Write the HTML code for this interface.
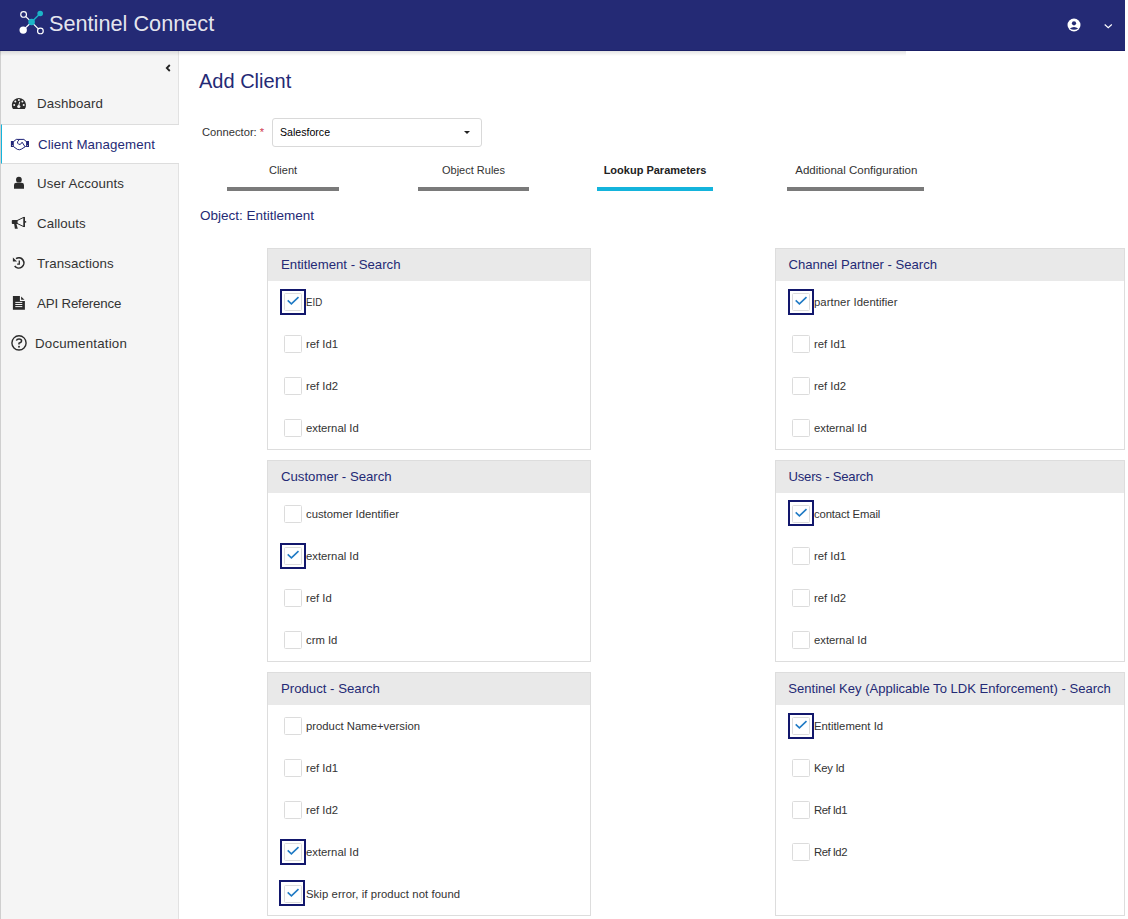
<!DOCTYPE html>
<html><head><meta charset="utf-8"><title>Sentinel Connect</title>
<style>
*{box-sizing:border-box;margin:0;padding:0}
html,body{width:1128px;height:919px;overflow:hidden;background:#fff;font-family:"Liberation Sans",sans-serif;}
body{position:relative}
.abs{position:absolute}
#hdr{position:absolute;left:0;top:0;width:1125px;height:51px;background:#242a75;border-bottom:1px solid #1a1f66}
#hshadow{position:absolute;left:0;top:51px;width:906px;height:5px;z-index:5;background:linear-gradient(rgba(0,0,0,.11),rgba(0,0,0,0))}
#brand{position:absolute;left:49px;top:9.6px;font-size:22.6px;color:rgba(255,255,255,.9);white-space:nowrap;line-height:28px;font-weight:400;transform:scaleX(.96);transform-origin:0 0}
#side{position:absolute;left:0;top:51px;width:179px;height:868px;background:#f5f5f5;border-left:1px solid #cfcfcf;border-right:1px solid #e2e2e2}
.mi{position:absolute;left:0;width:178px;height:40px;}
.mi .t{position:absolute;left:36px;top:1px;line-height:40px;font-size:13.3px;color:#333;white-space:nowrap;letter-spacing:.1px}
.mi.act{background:#fff;border-top:1px solid #ddd;border-bottom:1px solid #ddd;border-left:1px solid #14b4dc;width:178px}
.mi.act .t{color:#242a75;left:36px;top:0}
.mi svg{position:absolute}
#title{position:absolute;left:199px;top:68px;font-size:20px;color:#242a75;line-height:26px;white-space:nowrap}
#conn{position:absolute;left:202px;top:125px;font-size:11.2px;color:#333;line-height:14px;white-space:nowrap}
#conn b{color:#cf3d52;font-weight:400}
#sel{position:absolute;left:272px;top:118px;width:210px;height:29px;border:1px solid #d9d9d9;border-radius:3px;background:#fff}
#sel span{position:absolute;left:7px;top:6px;font-size:10.6px;line-height:14px;color:#000}
#sel i{position:absolute;left:191.3px;top:12px;width:0;height:0;border-left:3.2px solid transparent;border-right:3.2px solid transparent;border-top:3.3px solid #222}
.tab{position:absolute;top:163px;font-size:11px;line-height:14px;color:#333;text-align:center;white-space:nowrap}
.ul{position:absolute;top:187px;height:4px;background:#7a7a7a}
#obj{position:absolute;left:200px;top:207.6px;font-size:13.5px;line-height:16px;color:#242a75;white-space:nowrap}
.panel{position:absolute;border:1px solid #ddd;background:#fff}
.ph{position:absolute;left:0;top:0;right:0;height:32px;background:#e9e9e9}
.ph span{position:absolute;left:13px;top:8px;font-size:13.2px;line-height:16px;color:#242a75;white-space:nowrap}
.cb{position:absolute;left:16px;width:18px;height:18px;border:1px solid #dcdcdc;border-radius:1.5px;background:#fff}
.cb.on::before{content:"";box-sizing:border-box;position:absolute;left:-5px;top:-5px;width:26px;height:26px;border:2px solid #12176c}
.cb.fu::before{top:-6px}.cb.ful::before{top:-6px;left:-6px}
.cb.on svg{position:absolute;left:-1px;top:-1px}
.lb{position:absolute;left:38px;font-size:11.3px;line-height:14px;color:#333;white-space:nowrap}
</style></head><body>
<div id="hdr"></div>
<div id="hshadow"></div>
<svg class="abs" style="left:16px;top:6px" width="34" height="34" viewBox="16 6 34 34">
 <line x1="23.6" y1="14.4" x2="40.4" y2="30.9" stroke="#fff" stroke-width="1.25"/>
 <line x1="23.2" y1="30.1" x2="31.6" y2="22" stroke="#fff" stroke-width="1.25"/>
 <line x1="31.6" y1="22" x2="40.2" y2="13.5" stroke="#1cb5c8" stroke-width="1.4"/>
 <circle cx="23.6" cy="14.4" r="2.85" fill="#242a75" stroke="#fff" stroke-width="1.2"/>
 <circle cx="40.4" cy="30.9" r="2.85" fill="#242a75" stroke="#fff" stroke-width="1.2"/>
 <circle cx="23.2" cy="30.1" r="3.7" fill="#fff"/>
 <circle cx="40.2" cy="13.5" r="2.8" fill="#1cb5c8"/>
 <circle cx="31.6" cy="22" r="3.3" fill="#1cb5c8"/>
</svg>
<div id="brand">Sentinel Connect</div>
<svg class="abs" style="left:1067.4px;top:18.4px" width="14" height="14" viewBox="0 0 14 14"><circle cx="7" cy="7" r="6.5" fill="#fff"/><circle cx="7" cy="5.3" r="2.1" fill="#242a75"/><path d="M2.8 10.6 Q7 7.2 11.2 10.6 Q7 13 2.8 10.6Z" fill="#242a75"/></svg>
<svg class="abs" style="left:1102px;top:22px" width="12" height="8" viewBox="0 0 12 8"><path d="M2.7 2.5 L6.25 5.7 L9.8 2.5" fill="none" stroke="#fff" stroke-width="1.15"/></svg>

<div id="side">
 <svg class="abs" style="left:162px;top:11px" width="10" height="12" viewBox="0 0 10 12"><path d="M6.8 3 L3.8 6 L6.8 9" fill="none" stroke="#222" stroke-width="1.8"/></svg>
 <div class="mi" style="top:32px"><div class="t">Dashboard</div></div>
 <div class="mi act" style="top:73px"><div class="t">Client Management</div></div>
 <div class="mi" style="top:112px"><div class="t">User Accounts</div></div>
 <div class="mi" style="top:152px"><div class="t">Callouts</div></div>
 <div class="mi" style="top:192px"><div class="t">Transactions</div></div>
 <div class="mi" style="top:232px"><div class="t" style="letter-spacing:-.17px">API Reference</div></div>
 <div class="mi" style="top:272px"><div class="t" style="left:34px;letter-spacing:.2px">Documentation</div></div>
</div>


<svg class="abs" style="left:0;top:90px" width="40" height="270" viewBox="0 90 40 270">
 <!-- dashboard -->
 <path d="M13 109 A7.1 7.1 0 1 1 24.8 109 Z" fill="#2b2b2b"/>
 <g fill="#f5f5f5"><circle cx="14.2" cy="104.9" r="1"/><circle cx="15.3" cy="101.5" r="1"/><circle cx="18.9" cy="100" r="1"/><circle cx="22.4" cy="101.5" r="1"/><circle cx="23.7" cy="104.9" r="1"/><circle cx="18.8" cy="106.5" r="1.6"/></g>
 <path d="M18.6 106 L19.8 101.7" stroke="#f5f5f5" stroke-width="1" fill="none"/>
 <!-- handshake -->
 <g fill="none" stroke="#1e2278" stroke-width="1" stroke-linejoin="round" stroke-linecap="round">
  <path d="M13.8 141.4 L16.3 139.4 L23.9 139.4 L26.1 141.4"/>
  <path d="M13.8 146.8 L17.4 149.4 Q19.9 150.3 21.6 149 L25.4 146.6"/>
  <path d="M19.4 139.6 Q17 141.3 17.5 143 Q18.6 145.2 20.6 144.2 L22.1 142.2 L24.9 146.5"/>
 </g>
 <rect x="10.9" y="141" width="2.9" height="6" fill="#1e2278"/><rect x="26.1" y="141" width="2.9" height="6" fill="#1e2278"/>
 <circle cx="12.4" cy="145.5" r=".5" fill="#e8e0b0"/><circle cx="27.5" cy="145.5" r=".5" fill="#e8e0b0"/>
 <!-- user -->
 <circle cx="18.9" cy="179.7" r="2.9" fill="#2b2b2b"/>
 <path d="M14 188.8 L14 185 Q14 182.8 16.4 182.8 L21.5 182.8 Q24 182.8 24 185 L24 188.8 Z" fill="#2b2b2b"/>
 <!-- bullhorn -->
 <rect x="11.8" y="220" width="5.8" height="4" rx=".8" fill="#2b2b2b"/>
 <path d="M17 220.6 L24.1 217.2 L24.1 226.8 L17 223.4" fill="none" stroke="#2b2b2b" stroke-width="1"/>
 <path d="M24.2 216.9 L24.2 227" stroke="#2b2b2b" stroke-width="1.5"/>
 <circle cx="25.5" cy="221.9" r=".8" fill="#2b2b2b"/>
 <path d="M14.1 223.8 L14.9 228.7 L17.8 228.7 L16.4 223.8 Z" fill="#2b2b2b"/>
 <!-- history -->
 <path d="M16 258.6 A5.1 5.1 0 1 1 14.7 266" fill="none" stroke="#2b2b2b" stroke-width="1.6"/>
 <path d="M12.9 257.4 L12.9 261.6 L17 261.6 Z" fill="#2b2b2b"/>
 <path d="M19.3 260.4 L19.3 264.1 L17.2 264.1" fill="none" stroke="#2b2b2b" stroke-width="1.3"/>
 <!-- file-text -->
 <path d="M12.9 295.9 L19.9 295.9 L19.9 300.9 L24.9 300.9 L24.9 309.8 L12.9 309.8 Z" fill="#2b2b2b"/>
 <path d="M21.1 296.6 L21.1 299.8 L24.5 299.8 Z" fill="#2b2b2b"/>
 <g fill="#f5f5f5"><rect x="15.3" y="301.9" width="7" height="1"/><rect x="15.3" y="304" width="7" height="1"/><rect x="15.3" y="306.1" width="7" height="1"/></g>
 <!-- question -->
 <circle cx="19" cy="342.9" r="7.1" fill="none" stroke="#2b2b2b" stroke-width="1.4"/>
 <path d="M16.4 340.6 Q16.8 338.9 19 338.9 Q21.6 338.9 21.6 340.9 Q21.6 342.2 19 343.2 L19 344.4" fill="none" stroke="#2b2b2b" stroke-width="1.5"/>
 <circle cx="19" cy="346.7" r=".95" fill="#2b2b2b"/>
</svg>
<div id="title">Add Client</div>
<div id="conn">Connector: <b>*</b></div>
<div id="sel"><span>Salesforce</span><i></i></div>

<div class="tab" style="left:233px;width:100px">Client</div><div class="ul" style="left:227px;width:112px"></div>
<div class="tab" style="left:423.5px;width:100px">Object Rules</div><div class="ul" style="left:418px;width:111px"></div>
<div class="tab" style="left:580px;width:150px;font-weight:700;color:#222">Lookup Parameters</div><div class="ul" style="left:597px;width:116px;background:#14b4dc"></div>
<div class="tab" style="left:781.3px;width:150px;font-size:11.5px">Additional Configuration</div><div class="ul" style="left:787px;width:137px"></div>

<div id="obj">Object: Entitlement</div>

<!-- LEFT COLUMN -->
<div class="panel" style="left:267px;top:248px;width:324px;height:202px">
 <div class="ph"><span>Entitlement - Search</span></div>
 <div class="cb on" style="top:44px"><svg width="18" height="18" viewBox="0 0 18 18"><path d="M3.7 7.4 L7.4 10.9 L14.5 4.1" fill="none" stroke="#1f7ac4" stroke-width="1.55"/></svg></div><div class="lb" style="top:46px;left:38px;transform:scaleX(.86);transform-origin:0 0">EID</div>
 <div class="cb" style="top:86px"></div><div class="lb" style="top:88px">ref Id1</div>
 <div class="cb" style="top:128px"></div><div class="lb" style="top:130px">ref Id2</div>
 <div class="cb" style="top:170px"></div><div class="lb" style="top:172px">external Id</div>
</div>
<div class="panel" style="left:267px;top:460px;width:324px;height:202px">
 <div class="ph"><span>Customer - Search</span></div>
 <div class="cb" style="top:44px"></div><div class="lb" style="top:46px">customer Identifier</div>
 <div class="cb on" style="top:86px"><svg width="18" height="18" viewBox="0 0 18 18"><path d="M3.7 7.4 L7.4 10.9 L14.5 4.1" fill="none" stroke="#1f7ac4" stroke-width="1.55"/></svg></div><div class="lb" style="top:88px">external Id</div>
 <div class="cb" style="top:128px"></div><div class="lb" style="top:130px">ref Id</div>
 <div class="cb" style="top:170px"></div><div class="lb" style="top:172px">crm Id</div>
</div>
<div class="panel" style="left:267px;top:672px;width:324px;height:244px">
 <div class="ph"><span>Product - Search</span></div>
 <div class="cb" style="top:44px"></div><div class="lb" style="top:46px">product Name+version</div>
 <div class="cb" style="top:86px"></div><div class="lb" style="top:88px">ref Id1</div>
 <div class="cb" style="top:128px"></div><div class="lb" style="top:130px">ref Id2</div>
 <div class="cb on" style="top:170px"><svg width="18" height="18" viewBox="0 0 18 18"><path d="M3.7 7.4 L7.4 10.9 L14.5 4.1" fill="none" stroke="#1f7ac4" stroke-width="1.55"/></svg></div><div class="lb" style="top:172px">external Id</div>
 <div class="cb on ful" style="top:212px"><svg width="18" height="18" viewBox="0 0 18 18"><path d="M3.7 7.4 L7.4 10.9 L14.5 4.1" fill="none" stroke="#1f7ac4" stroke-width="1.55"/></svg></div><div class="lb" style="top:214px;letter-spacing:.09px">Skip error, if product not found</div>
</div>

<!-- RIGHT COLUMN -->
<div class="panel" style="left:775px;top:248px;width:350px;height:202px">
 <div class="ph"><span style="font-size:13.1px;left:12.5px">Channel Partner - Search</span></div>
 <div class="cb on" style="top:44px"><svg width="18" height="18" viewBox="0 0 18 18"><path d="M3.7 7.4 L7.4 10.9 L14.5 4.1" fill="none" stroke="#1f7ac4" stroke-width="1.55"/></svg></div><div class="lb" style="top:46px;letter-spacing:.07px">partner Identifier</div>
 <div class="cb" style="top:86px"></div><div class="lb" style="top:88px">ref Id1</div>
 <div class="cb" style="top:128px"></div><div class="lb" style="top:130px">ref Id2</div>
 <div class="cb" style="top:170px"></div><div class="lb" style="top:172px">external Id</div>
</div>
<div class="panel" style="left:775px;top:460px;width:350px;height:202px">
 <div class="ph"><span style="font-size:13.1px;letter-spacing:-.2px;left:12.5px">Users - Search</span></div>
 <div class="cb on fu" style="top:44px"><svg width="18" height="18" viewBox="0 0 18 18"><path d="M3.7 7.4 L7.4 10.9 L14.5 4.1" fill="none" stroke="#1f7ac4" stroke-width="1.55"/></svg></div><div class="lb" style="top:46px;letter-spacing:-.12px">contact Email</div>
 <div class="cb" style="top:86px"></div><div class="lb" style="top:88px">ref Id1</div>
 <div class="cb" style="top:128px"></div><div class="lb" style="top:130px">ref Id2</div>
 <div class="cb" style="top:170px"></div><div class="lb" style="top:172px">external Id</div>
</div>
<div class="panel" style="left:775px;top:672px;width:350px;height:244px">
 <div class="ph"><span style="font-size:13.05px;left:12.3px">Sentinel Key (Applicable To LDK Enforcement) - Search</span></div>
 <div class="cb on" style="top:44px"><svg width="18" height="18" viewBox="0 0 18 18"><path d="M3.7 7.4 L7.4 10.9 L14.5 4.1" fill="none" stroke="#1f7ac4" stroke-width="1.55"/></svg></div><div class="lb" style="top:46px">Entitlement Id</div>
 <div class="cb" style="top:86px"></div><div class="lb" style="top:88px;letter-spacing:-.3px">Key Id</div>
 <div class="cb" style="top:128px"></div><div class="lb" style="top:130px;letter-spacing:-.5px">Ref Id1</div>
 <div class="cb" style="top:170px"></div><div class="lb" style="top:172px;letter-spacing:-.5px">Ref Id2</div>
</div>
</body></html>
